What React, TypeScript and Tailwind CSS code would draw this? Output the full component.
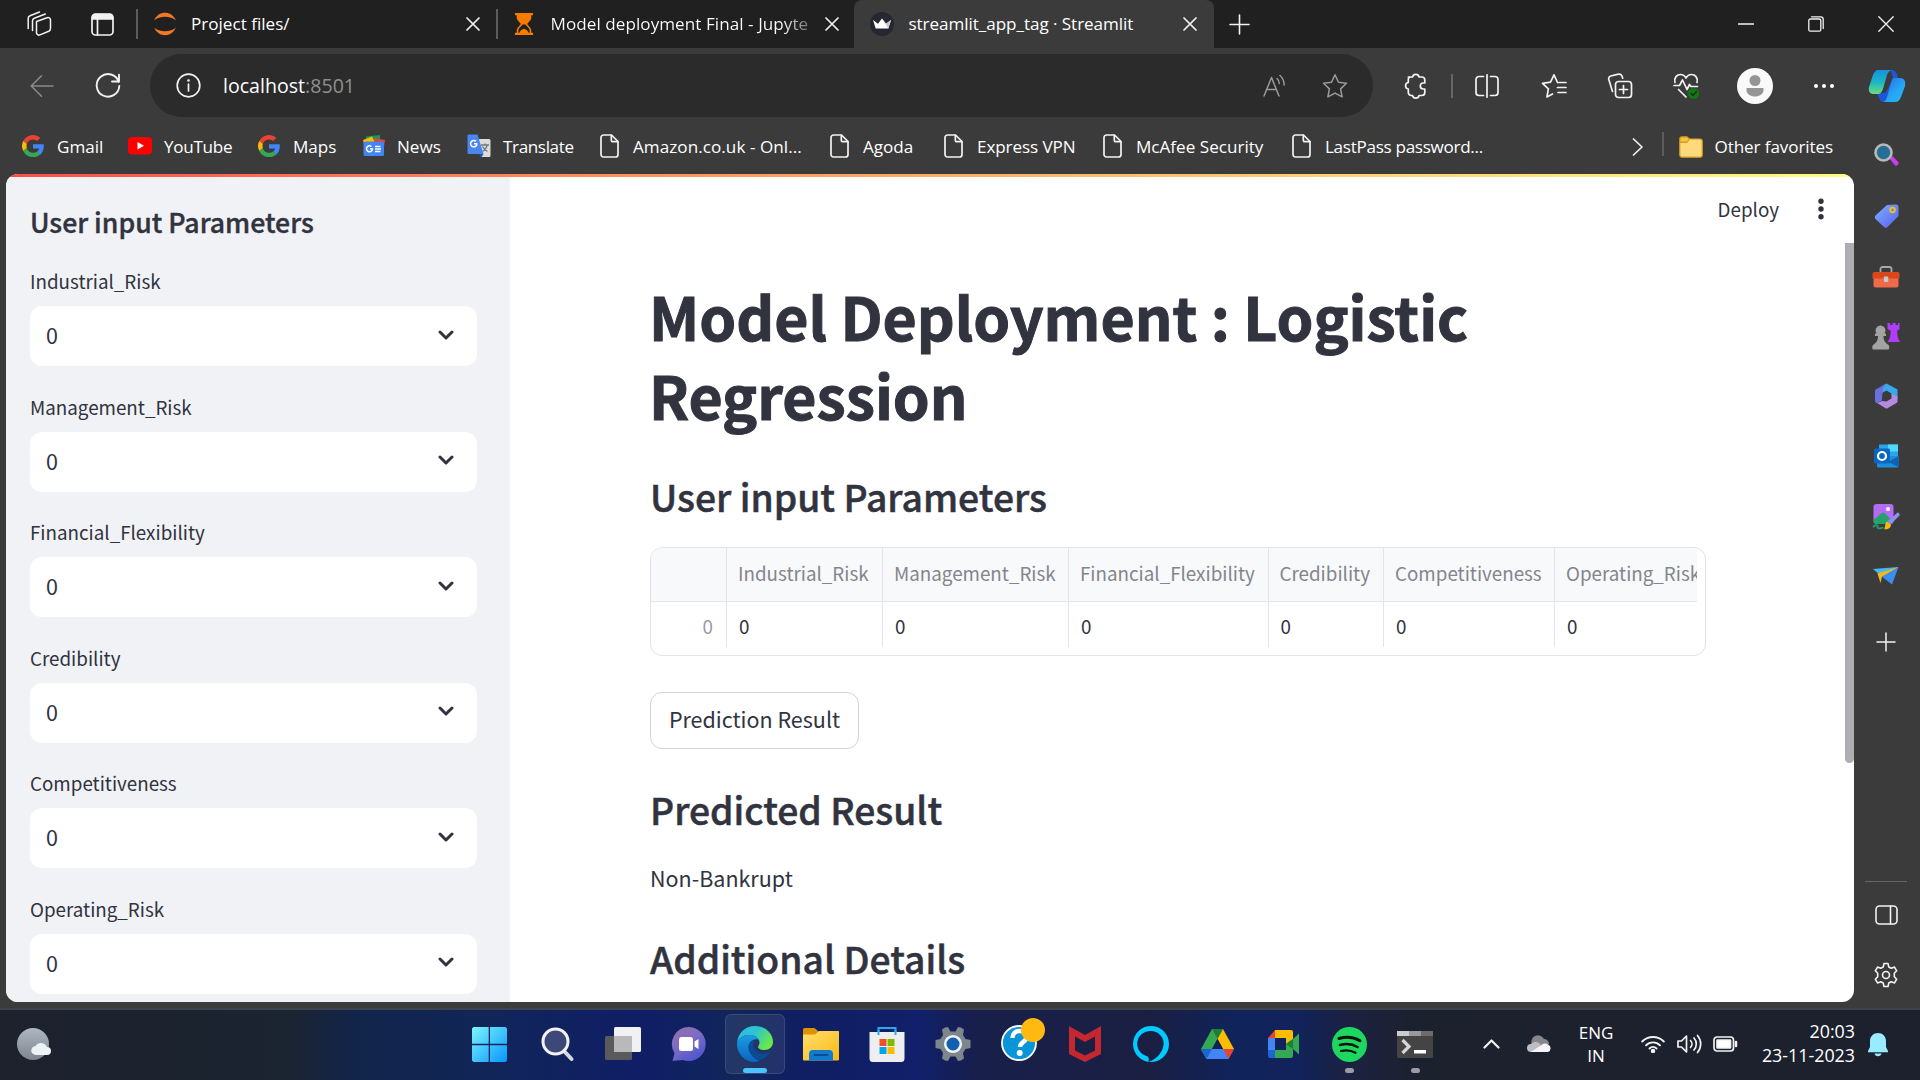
import React from 'react';

type P = { children?: React.ReactNode };

const Stroke = ({ w, h, children, c = '#f2f2f2', sw = 1.6 }: P & { w: number; h: number; c?: string; sw?: number }) => (
  <svg width={w} height={h} viewBox={`0 0 ${w} ${h}`} fill="none" stroke={c} strokeWidth={sw} strokeLinecap="round" strokeLinejoin="round" className="block shrink-0">
    {children}
  </svg>
);
const Art = ({ w, h, children }: P & { w: number; h: number }) => (
  <svg width={w} height={h} viewBox={`0 0 ${w} ${h}`} className="block shrink-0 overflow-visible">{children}</svg>
);

/* Centres an icon in a fixed-width cell of a bar */
const Cell = ({ className, children }: P & { className: string }) => (
  <div className={`flex shrink-0 items-center justify-center ${className}`}>{children}</div>
);

const Close = () => (
  <Stroke w={14} h={14} sw={1.7}><path d="M1 1 13 13M13 1 1 13" /></Stroke>
);

/* ---------- tab strip ---------- */
function TabStrip() {
  return (
    <div className="flex h-12 shrink-0 items-center bg-[#202020] text-[17.1px] text-white">
      <Cell className="w-[78px]">
        <Stroke w={26} h={26} sw={1.5}>
          <path d="M10.5 10.5 21 6.8c1.7-.6 3.5.3 3.500 2.200v8.600c0 1.200-.7 2.200-1.800 2.700l-8.700 3.600c-1.700.7-3.500-.4-3.500-2.200z" />
          <path d="M6.500 19.500V9.800c0-1.200.7-2.200 1.800-2.600l11-4.200" />
          <path d="M2.200 17.500V7.300c0-1.200.7-2.200 1.800-2.600L13.500 1" />
        </Stroke>
      </Cell>
      <Cell className="w-[48px]">
        <Stroke w={23} h={23} sw={1.7}>
          <rect x="1" y="1" width="21" height="21" rx="3.500" />
          <path d="M1.500 6V4.500a3 3 0 0 1 3-3h14a3 3 0 0 1 3 3V6z" fill="#f2f2f2" />
          <path d="M6.500 6v16" />
        </Stroke>
      </Cell>
      <div className="ml-[10px] h-[30px] w-[1.500px] bg-[#5c5c5c]" />
      <Cell className="ml-[15.500px] w-6">
        <Art w={24} h={24}>
          <path d="M1 8.500C3.500 3.200 7.500.8 12 .8s8.500 2.400 11 7.700C20 5.900 16.300 4.700 12 4.700S4 5.900 1 8.500z" fill="#f37726" />
          <path d="M1 15.500c2.500 5.300 6.500 7.700 11 7.700s8.500-2.400 11-7.700c-3 2.600-6.700 3.800-11 3.800S4 18.100 1 15.500z" fill="#f37726" />
        </Art>
      </Cell>
      <span className="ml-[14px] w-[275px] whitespace-nowrap">Project files/</span>
      <Close />
      <div className="ml-[16px] h-[30px] w-[1.500px] bg-[#5c5c5c]" />
      <Cell className="ml-[16px] w-5">
        <Art w={18} h={22}>
          <path d="M0 0h18v2.200H0zM0 19.800h18V22H0z" fill="#f57c00" />
          <path d="M2.600 2v3c0 2.500 4 4.500 4 6s-4 3.500-4 6v3M15.400 2v3c0 2.500-4 4.500-4 6s4 3.500 4 6v3" stroke="#f57c00" strokeWidth="1.700" fill="none" />
          <path d="M2.600 2h12.800v3c0 2.500-4 4.500-4 6.500H6.600c0-2-4-4-4-6.500zM4.500 20c.3-2.200 2-3.600 4.500-4.300 2.500.7 4.200 2.100 4.500 4.300z" fill="#f57c00" />
        </Art>
      </Cell>
      <span className="ml-[17px] w-[263px] whitespace-nowrap bg-linear-to-r from-white from-88% to-[#555] bg-clip-text tracking-[0.05px] text-transparent">
        Model deployment Final - Jupyte
      </span>
      <div className="ml-[11px]"><Close /></div>
      <div className="ml-[15px] flex h-12 w-[360px] shrink-0 items-center rounded-t-lg bg-[#3b3b3b] pl-[16px]">
        <Art w={24} h={24}>
          <circle cx="12" cy="12" r="12" fill="#262730" />
          <path d="M3 8l5 3.800L12 6.500l4 5.300L21 8l-2.700 8.500H5.700z" fill="#fff" />
          <path d="M12 6.500l4 5.300L21 8l-2.700 8.500z" fill="#c9c9cf" />
        </Art>
        <span className="ml-[15px] w-[274px] whitespace-nowrap tracking-[-0.060px]">streamlit_app_tag · Streamlit</span>
        <Close />
      </div>
      <Cell className="ml-[14px] w-6">
        <Stroke w={21} h={21} sw={1.6}><path d="M10.500 1v19M1 10.500h19" /></Stroke>
      </Cell>
      <div className="flex flex-1 justify-end pr-[26px]">
        <Cell className="w-[70px]"><Stroke w={16} h={16} sw={1.3}><path d="M.5 8h15" /></Stroke></Cell>
        <Cell className="w-[70px]">
          <Stroke w={16} h={16} sw={1.300}>
            <rect x=".8" y="3" width="12" height="12.200" rx="1.500" />
            <path d="M3.500 .8h9.300a2.400 2.400 0 0 1 2.400 2.400v9.300" />
          </Stroke>
        </Cell>
        <div className="flex w-[43px] items-center justify-end"><Stroke w={16} h={16} sw={1.300}><path d="M.8.800l14.400 14.400M15.200.800L.8 15.200" /></Stroke></div>
      </div>
    </div>
  );
}

/* ---------- address bar ---------- */
function Toolbar() {
  return (
    <div className="flex h-[75px] shrink-0 items-center bg-[#3b3b3b]">
      <Cell className="ml-[30px] w-6">
        <Stroke w={24} h={24} c="#8a8a8a"><path d="M23 12H1.500M11.500 1.800 1.200 12l10.300 10.200" /></Stroke>
      </Cell>
      <Cell className="ml-[42px] w-6">
        <Stroke w={26} h={26} sw={1.900}><path d="M23.800 9A11.300 11.300 0 1 0 24.300 13M24 1.800V8.500h-7" /></Stroke>
      </Cell>
      <div className="ml-[30px] flex h-[63px] w-[1223px] items-center rounded-full bg-[#2b2b2b] text-[19.600px]">
        <Cell className="ml-[25px] w-[26px]">
          <Stroke w={25} h={25} sw={1.700}>
            <circle cx="12.500" cy="12.500" r="11.300" />
            <path d="M12.500 11v7" />
            <circle cx="12.500" cy="7.500" r=".5" fill="#fff" />
          </Stroke>
        </Cell>
        <span className="ml-[22px] flex-1 text-white">localhost<span className="text-[#8f8f8f]">:8501</span></span>
        <Cell className="w-[50px]">
          <Stroke w={24} h={24} c="#9a9a9a" sw={1.500}>
            <path d="M1 22 8.500 3.500 16 22M3.500 15.500h10" />
            <path d="M14 4.500c1.500 1.200 2.300 3 2.300 5M17 1.500c2.500 2 4 5 4.200 9.500" />
          </Stroke>
        </Cell>
        <Cell className="mr-[3px] w-[70px]">
          <Stroke w={26} h={26} c="#9a9a9a" sw={1.500}><path d="M13 1.800l3.500 7.400 8 1.100-5.900 5.600 1.500 8L13 20.100 5.900 23.900l1.500-8L1.500 10.300l8-1.100z" /></Stroke>
        </Cell>
      </div>
      <Cell className="ml-[24px] w-9">
        <Stroke w={24} h={26} sw={1.700}>
          <path d="M4.500 4.500h4.200a3.400 3.400 0 0 1 6.600 0H18a3 3 0 0 1 3 3v3h-1.500a3 3 0 0 0 0 6H21v3.500a3 3 0 0 1-3 3h-2.700a3.400 3.400 0 0 1-6.600 0H7.500a3 3 0 0 1-3-3v-3.500a3.300 3.300 0 0 1 0-6.500V7a2.500 2.500 0 0 1 2.500-2.500" transform="translate(.8 -.5)" />
        </Stroke>
      </Cell>
      <div className="ml-[18px] h-6 w-[1.500px] bg-[#666]" />
      <Cell className="w-[69px]">
        <Stroke w={24} h={24} sw={1.700}>
          <path d="M12 .8v22.400M8.500 2.500H4a3 3 0 0 0-3 3v13a3 3 0 0 0 3 3h4.500M15.500 2.500H20a3 3 0 0 1 3 3v13a3 3 0 0 1-3 3h-4.500" />
        </Stroke>
      </Cell>
      <Cell className="w-[65px]">
        <Stroke w={26} h={26} sw={1.700}>
          <path d="M16.500 9.500 13 1.800 9.500 9.200l-8 1.100 5.900 5.600-1.500 8L11.500 21M18 9.500h7M16.500 14.500h8.500M17 19.500h8" />
        </Stroke>
      </Cell>
      <Cell className="w-[66px]">
        <Stroke w={26} h={26} sw={1.700}>
          <rect x="8.500" y="8.500" width="16" height="16" rx="3" />
          <path d="M16.500 12.500v8M12.500 16.500h8M5.500 18.500 1.800 6.500A3 3 0 0 1 3.700 3L11.500 1.200a3 3 0 0 1 3.600 2l.6 2" />
        </Stroke>
      </Cell>
      <Cell className="w-[66px]">
        <Stroke w={26} h={26} sw={1.700}>
          <path d="M2 9.500C.8 4.500 4 1.500 7.500 1.500c2.500 0 4.300 1.300 5.500 3.500 1.200-2.200 3-3.500 5.500-3.500C22 1.500 25.200 4.500 24 9.500" />
          <path d="M1 12.500h5.500L9.500 7l4.500 9.500 2.500-5 1.500 2h6.500M5.500 16.500l7.500 7.500" />
          <circle cx="20.500" cy="20.500" r="5.300" fill="#107c10" stroke="#107c10" strokeWidth=".5" />
          <path d="M18 20.500l2 2 3.500-4" stroke="#1d2b1d" strokeWidth="1.300" />
        </Stroke>
      </Cell>
      <Cell className="w-[72px]">
        <Art w={36} h={36}>
          <circle cx="18" cy="18" r="18" fill="#f9f9f9" />
          <circle cx="18" cy="12.500" r="5.500" fill="#959595" />
          <path d="M9.500 20h17v2c0 4-4 6.500-8.500 6.500S9.500 26 9.500 22z" fill="#959595" />
        </Art>
      </Cell>
      <Cell className="w-[66px]">
        <Art w={20} h={4}><circle cx="2" cy="2" r="2" fill="#fff" /><circle cx="10" cy="2" r="2" fill="#fff" /><circle cx="18" cy="2" r="2" fill="#fff" /></Art>
      </Cell>
      <Cell className="w-[60px]">
        <Art w={36} h={32}>
          <defs>
            <linearGradient id="cpA" x1="0" y1="0" x2="0" y2="1"><stop offset="0" stopColor="#1a8fe0" /><stop offset=".5" stopColor="#18b5c8" /><stop offset="1" stopColor="#6fdc7a" /></linearGradient>
            <linearGradient id="cpB" x1="0" y1="0" x2="1" y2="1"><stop offset="0" stopColor="#2a62e8" /><stop offset=".6" stopColor="#27a8f5" /><stop offset="1" stopColor="#22b8f0" /></linearGradient>
          </defs>
          <path d="M8 23h8l2-3 6-12c-1-6-3-8-5-8h4c3 0 5 3 6 8l-9 21c-1 2-2 3-4 3-3 0-5-1-6-4z" fill="#1b57d6" />
          <path d="M9 0h14c-2 0-4 2-5 5l-4 14c-1 3-3 5-5 5H4c-3 0-5-3-4-7L4 5c1-3 3-5 5-5z" fill="url(#cpA)" />
          <path d="M25 8h6c4 0 6 3 5 8l-4 11c-1 3-3 5-6 5H13c3 0 4-2 5-5l4-14c1-3 1-5 3-5z" fill="url(#cpB)" />
        </Art>
      </Cell>
    </div>
  );
}

/* ---------- favorites bar ---------- */
const Google = () => (
  <Art w={22} h={22}>
    <path d="M11 4.400c2 0 3.300.8 4.200 1.600l3.200-3.200A11 11 0 0 0 1.200 6.100l3.600 2.800A6.600 6.600 0 0 1 11 4.400z" fill="#ea4335" />
    <path d="M21.700 9.200H11v4.300h6.100a5.400 5.400 0 0 1-2.300 3.500l3.500 2.700c2.200-2 3.500-5 3.500-8.500 0-.7 0-1.300-.1-2z" fill="#4285f4" />
    <path d="M4.800 13a6.600 6.600 0 0 1 0-4.100L1.200 6.100a11 11 0 0 0 0 9.800z" fill="#fbbc05" />
    <path d="M11 22c3 0 5.500-1 7.300-2.600L14.800 16.800c-1 .7-2.200 1-3.800 1A6.600 6.600 0 0 1 4.800 13l-3.600 2.900A11 11 0 0 0 11 22z" fill="#34a853" />
  </Art>
);
const YouTube = () => (
  <Art w={24} h={18}><rect width="24" height="17.500" rx="4" fill="#f00" /><path d="M9.500 5v7.500l6.500-3.700z" fill="#fff" /></Art>
);
const News = () => (
  <Art w={24} h={22}>
    <path d="M4 1.500 18 0v9H5z" fill="#0f9d58" />
    <path d="M1 5l9-3.500 4 8L3 13z" fill="#fbbc04" />
    <path d="M12 3l11 2-1.500 10H12z" fill="#ea4335" />
    <rect x="1.500" y="6.500" width="20.500" height="14.500" rx="1.500" fill="#4285f4" />
    <path d="M10.500 13.500a3 3 0 1 1-1-2M8 13.800h2.600" stroke="#fff" strokeWidth="1.500" fill="none" />
    <path d="M13 11.500h5.500M13 14h6M13 16.500h5.500" stroke="#fff" strokeWidth="1.500" />
  </Art>
);
const Translate = () => (
  <Art w={24} h={24}>
    <path d="M10 5h12a1.500 1.500 0 0 1 1.500 1.500v15A1.500 1.500 0 0 1 22 23h-8z" fill="#dcdcdc" />
    <path d="M14 11h8M18 9.500V11M20.500 11c-.8 3-3 5-5 6.500M15.500 12.500c1 2 3 4 5 5" stroke="#6f7b80" strokeWidth="1.300" fill="none" />
    <path d="M12 20h4.500L14 24z" fill="#1b54b8" />
    <path d="M1.500.500h9L16.500 20H2A1.500 1.500 0 0 1 .5 18.500v-17z" fill="#4a86ee" />
    <path d="M10 9.500a3.200 3.200 0 1 1-1-2.200M7 9.800h3.200" stroke="#fff" strokeWidth="1.500" fill="none" />
  </Art>
);
const Page = () => (
  <Stroke w={19} h={24} sw={1.700}>
    <path d="M3.500 1h8L18 7.500V20.500a2.500 2.500 0 0 1-2.500 2.500h-12A2.500 2.500 0 0 1 1 20.500v-17A2.500 2.500 0 0 1 3.500 1z" />
    <path d="M11.300 1.300V6A1.700 1.700 0 0 0 13 7.700h4.700" />
  </Stroke>
);

const favorites: [React.ReactNode, string, string, string, string][] = [
  [<Google />, 'Gmail', 'w-[106px]', 'w-[35px]', ''],
  [<YouTube />, 'YouTube', 'w-[130px]', 'w-[36px]', 'tracking-[-0.3px]'],
  [<Google />, 'Maps', 'w-[104px]', 'w-[35px]', ''],
  [<News />, 'News', 'w-[105px]', 'w-[35px]', ''],
  [<Translate />, 'Translate', 'w-[133px]', 'w-[36px]', 'tracking-[-0.38px]'],
  [<Page />, 'Amazon.co.uk - Onl...', 'w-[230px]', 'w-[33px]', 'tracking-[0.05px]'],
  [<Page />, 'Agoda', 'w-[114px]', 'w-[33px]', ''],
  [<Page />, 'Express VPN', 'w-[159px]', 'w-[33px]', 'tracking-[-0.1px]'],
  [<Page />, 'McAfee Security', 'w-[189px]', 'w-[33px]', ''],
  [<Page />, 'LastPass password...', 'w-[340px]', 'w-[33px]', 'tracking-[-0.3px]'],
];

function Favorites() {
  return (
    <div className="flex h-[51px] shrink-0 items-center bg-[#3b3b3b] pb-[4px] pl-[22px] text-[17.100px] text-white">
      {favorites.map(([icon, label, w, iw, tr], i) => (
        <div key={i} className={`flex shrink-0 items-center ${w}`}>
          <div className={`shrink-0 ${iw}`}>{icon}</div>
          <span className={`whitespace-nowrap ${tr}`}>{label}</span>
        </div>
      ))}
      <Stroke w={11} h={18} sw={1.700}><path d="M1.500 1 10 9l-8.500 8" /></Stroke>
      <div className="mb-[6px] ml-[19px] h-6 w-[1.500px] bg-[#5c5c5c]" />
      <div className="ml-[15px] w-9">
        <Art w={24} h={22}>
          <path d="M.8 3A2.200 2.200 0 0 1 3 .8h5L10.500 3v3H.8z" fill="#f5c342" stroke="#c99a16" strokeWidth="1.200" />
          <path d="M.8 6.500h7L10.500 3H21a2.200 2.200 0 0 1 2.200 2.200V19A2.200 2.200 0 0 1 21 21.200H3A2.200 2.200 0 0 1 .8 19z" fill="#ffd97a" stroke="#d5a021" strokeWidth="1.200" />
        </Art>
      </div>
      <span className="whitespace-nowrap tracking-[-0.1px]">Other favorites</span>
    </div>
  );
}

/* ---------- streamlit page ---------- */
const fields = ['Industrial_Risk', 'Management_Risk', 'Financial_Flexibility', 'Credibility', 'Competitiveness', 'Operating_Risk'];

function Sidebar() {
  return (
    <aside className="h-full w-[504px] shrink-0 overflow-hidden bg-[#f0f2f6] pl-6 pr-[33px] pt-[27px]">
      <h2 className="text-[26.650px] leading-9 font-medium [-webkit-text-stroke:0.4px_#31333f]">User input Parameters</h2>
      <div className="pt-[26px]">
        {fields.map((f) => (
          <div key={f} className="h-[125.600px]">
            <div className="h-10 text-[18.800px] leading-[30px]">{f}</div>
            <div className="flex h-[60px] items-center justify-between rounded-xl bg-white pb-[3px] pl-[16px] pr-[23px] text-[21.500px] leading-[57px]">
              <span>0</span>
              <Stroke w={16} h={10} c="#31333f" sw={3}><path d="M2 2l6 6 6-6" /></Stroke>
            </div>
          </div>
        ))}
      </div>
    </aside>
  );
}

const columns: [string, string][] = [
  ['Industrial_Risk', 'w-[156px]'],
  ['Management_Risk', 'w-[186px]'],
  ['Financial_Flexibility', 'w-[199.500px]'],
  ['Credibility', 'w-[115.500px]'],
  ['Competitiveness', 'w-[171px]'],
  ['Operating_Risk', 'w-[142px]'],
];

function DataTable() {
  return (
    <div className="flex h-[109px] w-[1056px] overflow-hidden rounded-xl border border-[#e2e3e7] text-[18.800px]">
      <div className="w-[76px] shrink-0">
        <div className="h-[54px] border-r-[1.500px] border-b-[1.500px] border-[#e3e5e8] bg-[#f8f9fb]" />
        <div className="h-[45px] border-r-[1.500px] border-[#e3e5e8] pr-[13px] text-right leading-[48px] text-[#9a9ba3]">0</div>
      </div>
      {columns.map(([name, w], i) => (
        <div key={name} className={`shrink-0 overflow-hidden ${w}`}>
          <div className={`h-[54px] border-b-[1.500px] border-[#e3e5e8] bg-[#f8f9fb] pl-[11px] leading-[50px] whitespace-nowrap text-[#83858d] ${i < 5 ? 'border-r-[1.500px]' : ''}`}>{name}</div>
          <div className={`h-[45px] border-[#e3e5e8] pl-[12px] leading-[48px] ${i < 5 ? 'border-r-[1.500px]' : ''}`}>0</div>
        </div>
      ))}
    </div>
  );
}

const Heading = ({ children, className }: P & { className: string }) => (
  <h3 className={`h-[50px] text-[37.280px] leading-[50px] font-medium [-webkit-text-stroke:0.5px_#31333f] ${className}`}>{children}</h3>
);

function StreamlitPage() {
  return (
    <div className="flex h-[828px] w-[1848px] flex-col overflow-hidden rounded-xl bg-white font-['Noto_Sans_CJK_SC',sans-serif] text-[#31333f]">
      <div className="h-[3px] shrink-0 bg-linear-to-r from-[#ff4b4b] to-[#fffd80]" />
      <div className="flex min-h-0 flex-1">
        <Sidebar />
        <div className="flex min-w-0 flex-1 flex-col">
          <div className="flex h-[66px] shrink-0 items-center justify-end pr-[30px] pb-[2px]">
            <span className="text-[18.800px] leading-[30px]">Deploy</span>
            <div className="ml-[39px]">
              <Art w={6} h={22}><circle cx="3" cy="3.200" r="2.700" fill="#31333f" /><circle cx="3" cy="11" r="2.700" fill="#31333f" /><circle cx="3" cy="18.800" r="2.700" fill="#31333f" /></Art>
            </div>
          </div>
          <div className="flex min-h-0 flex-1">
            <main className="min-h-0 flex-1 overflow-hidden pl-[140px] pt-[33px]">
              <h1 className="-ml-px w-[1056px] text-[58.980px] leading-[79px] font-bold [-webkit-text-stroke:1px_#31333f]">Model Deployment : Logistic<br />Regression</h1>
              <Heading className="mt-[37px]">User input Parameters</Heading>
              <div className="mt-[26px]"><DataTable /></div>
              <button className="mt-[36px] block h-[57px] w-[209px] rounded-xl border border-[#d3d4d8] pb-[3px] text-[21.500px] leading-[52px]">Prediction Result</button>
              <Heading className="mt-[35px]">Predicted Result</Heading>
              <p className="mt-[25px] text-[21.500px] leading-[38px]">Non-Bankrupt</p>
              <Heading className="mt-[36px]">Additional Details</Heading>
            </main>
            <div className="h-[520px] w-[9px] rounded-b-full bg-[#adadb2]" />
          </div>
        </div>
      </div>
    </div>
  );
}

/* ---------- edge sidebar ---------- */
function EdgeSidebar() {
  return (
    <div className="flex h-full flex-1 flex-col items-center pr-[2px]">
      <Cell className="-mt-[47px] h-[56px]">
        <Art w={25} h={24}>
          <path d="M15.500 15.500l3-2.500 6 6.500c.5 2-2 4-3.500 3z" fill="#c83cf2" />
          <circle cx="9.500" cy="9.500" r="8" fill="#256f96" stroke="#b9b9b9" strokeWidth="2.600" />
        </Art>
      </Cell>
      <Cell className="h-[66px]">
        <Art w={25} h={24}>
          <defs><linearGradient id="tg" x1="0" y1="0" x2="1" y2="1"><stop stopColor="#7fb2ff" /><stop offset="1" stopColor="#5a5cf5" /></linearGradient></defs>
          <path d="M13 1l9-.5a2.500 2.500 0 0 1 2.500 2.500v9L13.500 23a2.500 2.500 0 0 1-3.500 0L1.500 15a2.500 2.500 0 0 1 0-3.500z" fill="url(#tg)" />
          <circle cx="18.500" cy="6" r="2.300" fill="none" stroke="#f5c400" strokeWidth="1.800" />
        </Art>
      </Cell>
      <Cell className="h-[56px]">
        <Art w={28} h={22}>
          <path d="M8.500 7V3a2 2 0 0 1 2-2h7a2 2 0 0 1 2 2v4" fill="none" stroke="#a8a8a8" strokeWidth="1.800" />
          <rect x="1.500" y="9" width="25" height="12.500" rx="2" fill="#ee6a48" />
          <path d="M.5 8a2 2 0 0 1 2-2h23a2 2 0 0 1 2 2v4.500H.5z" fill="#d8481c" />
          <rect x="11.800" y="10.500" width="4.500" height="5.500" rx="1" fill="#c9c9c9" />
        </Art>
      </Cell>
      <Cell className="h-[62px]">
        <Art w={28} h={28}>
          <path d="M15.500 1h2.500v2h2.500V1h3v2H26V1h1.500v6L25 9l.8 6.500 2.200 4.500H15.500l2.500-4.500.8-6.500-3.300-2z" fill="#b03cf5" />
          <path d="M8.500 3.500a5 5 0 0 1 4 8H14v2.500h-2.500c0 4 1 6 5 9 1 1 1 4 0 4.500H1c-1-.5-1-3.500 0-4.500 4-3 5-5 5-9H3V11.500h1.500a5 5 0 0 1 4-8z" fill="#a3a3a3" />
        </Art>
      </Cell>
      <Cell className="h-[58px]">
        <Art w={25} h={26}>
          <path d="M12.500.5 23.500 6.500v9l-6-3.500v-1.500l-5-3-4.500 2.500V3z" fill="#3aa8ee" />
          <path d="M23.500 13.500v5a2 2 0 0 1-1 1.500L13.500 25.200a2 2 0 0 1-2 0L3 20l5-2 4.500.5 5-3V11z" fill="#b38ade" />
          <path d="M1 8a2 2 0 0 1 1-1.800L12.500.5 9 4.500 7.800 17.500 3 20.200A3 3 0 0 1 1 18z" fill="#6a70dc" />
        </Art>
      </Cell>
      <Cell className="h-[62px]">
        <Art w={25} h={24}>
          <rect x="5" y=".5" width="19" height="14" fill="#2aa5ec" /><rect x="14" y=".5" width="10" height="7" fill="#50d9ff" />
          <path d="M3 12h21.500v10a1.500 1.500 0 0 1-1.500 1.500H4.500A1.500 1.500 0 0 1 3 22z" fill="#1a8fe0" />
          <path d="M24.500 12 14 18l10.500 5z" fill="#0f64ad" />
          <rect x="0" y="4.500" width="16" height="15" rx="1.500" fill="#0a66bf" />
          <circle cx="8" cy="12" r="4" fill="none" stroke="#fff" strokeWidth="2.200" />
        </Art>
      </Cell>
      <Cell className="h-[58px]">
        <Art w={28} h={27}>
          <rect x="1.500" y="1" width="20" height="20" rx="3" fill="#b56cf5" />
          <path d="M1.500 17 9 10.500a3 3 0 0 1 4 0l7 7-2 3.500H4a3 3 0 0 1-2.500-3z" fill="#26a36a" />
          <circle cx="16" cy="6" r="2" fill="#fff" />
          <path d="M1 24c3-3 5-2 4.500 0s3 1.500 6 .5" stroke="#22a06b" strokeWidth="1.800" fill="none" />
          <path d="M25.500 9.500a2.300 2.300 0 0 1 2 3L19 21l-3.500-2.500z" fill="#8f8df8" />
          <path d="M15 18.500l4 3c0 4-4 5.500-7 4.500 1.500-1 .5-5.500 3-7.500z" fill="#f5b91a" />
        </Art>
      </Cell>
      <Cell className="h-[62px]">
        <Art w={26} h={20}>
          <path d="M0 3 25.500 1 8 10z" fill="#43b9ee" /><path d="M25.500 1 19 18.500 8 10z" fill="#3b8df2" />
          <path d="M25.500 1 4.500 7.500 7.500 17 9 10.500z" fill="#f7b917" />
        </Art>
      </Cell>
      <Cell className="h-[70px]"><Stroke w={20} h={20} sw={1.500}><path d="M10 1v18M1 10h18" /></Stroke></Cell>
      <div className="mt-auto h-[1.500px] w-[42px] bg-[#666]" />
      <Cell className="h-[66px]">
        <Stroke w={23} h={20} sw={1.600}><rect x="1" y="1" width="21" height="18" rx="3.500" /><path d="M15.500 1v18" /></Stroke>
      </Cell>
      <Cell className="mb-[6px] h-[54px]">
        <Stroke w={26} h={26} sw={1.600}>
          <path d="M11 1.500h4l.8 3.500 2.400 1.300 3.300-1.200 2.200 3.700-2.400 2.500v3.400l2.400 2.500-2.200 3.700-3.300-1.200L15.800 21l-.8 3.500h-4l-.8-3.500-2.400-1.300-3.300 1.200-2.200-3.700 2.400-2.500v-3.400L2.300 8.800l2.200-3.700 3.300 1.200L10.200 5z" />
          <circle cx="13" cy="13" r="3.500" />
        </Stroke>
      </Cell>
    </div>
  );
}

/* ---------- taskbar ---------- */
const Windows = () => (
  <Art w={35} h={35}>
    <defs><linearGradient id="wn" gradientUnits="userSpaceOnUse" x1="0" y1="0" x2="35" y2="35"><stop stopColor="#7df5fb" /><stop offset="1" stopColor="#0796ff" /></linearGradient></defs>
    <path d="M1.500 0H16.700v16.700H0V1.500zM18 0h15.500L35 1.500v15.200H18zM0 18.200h16.700V35H1.500L0 33.500zM18 18.200h17v15.300L33.500 35H18z" fill="url(#wn)" />
  </Art>
);
const Search = () => (
  <Art w={33} h={34}>
    <path d="M23 24l7.500 8" stroke="#d9d9dd" strokeWidth="4" strokeLinecap="round" />
    <circle cx="14.500" cy="14.500" r="12.500" fill="#3d4878" stroke="#f2f2f4" strokeWidth="3" />
  </Art>
);
const TaskView = () => (
  <Art w={36} h={34}>
    <rect x="0" y="9" width="27" height="24" rx="1.500" fill="#5a5a5c" />
    <rect x="9" y="0" width="27" height="25" rx="1.500" fill="#f1f1f3" />
    <path d="M9 9h18v16H10a1 1 0 0 1-1-1z" fill="#b9b9bb" />
  </Art>
);
const Chat = () => (
  <Art w={34} h={34}>
    <defs><linearGradient id="ch" x1="0" y1="0" x2=".6" y2="1"><stop stopColor="#9c6fae" /><stop offset=".5" stopColor="#7b6cc4" /><stop offset="1" stopColor="#5257cf" /></linearGradient></defs>
    <path d="M17 0a17 17 0 1 1-6 33L.5 34 2.500 26A17 17 0 0 1 17 0z" fill="url(#ch)" />
    <rect x="7" y="10" width="14" height="14" rx="2.500" fill="#fff" /><path d="M22.500 14.500l4-2.500v10l-4-2.500z" fill="#fff" />
  </Art>
);
const Edge = () => (
  <Art w={36} h={36}>
    <defs>
      <linearGradient id="e1" x1="0" y1="0" x2="1" y2=".5"><stop stopColor="#32b8f0" /><stop offset=".5" stopColor="#2cc4d0" /><stop offset="1" stopColor="#69e84c" /></linearGradient>
      <linearGradient id="e2" x1="0" y1="0" x2="0" y2="1"><stop stopColor="#1b9de2" /><stop offset="1" stopColor="#0a62c2" /></linearGradient>
    </defs>
    <path d="M0 17C1 7 8 0 18 0c10 0 18 7 18 16 0 5-4 8-8.500 8-4 0-6.500-1.500-6.500-3 0-1 1.500-2 1.500-4.500C22.500 12 18 9 12.500 9 6 9 1.500 12.500 0 17z" fill="url(#e1)" />
    <path d="M0 17C1.500 12.500 6 9 12.500 9c4.500 0 8 2 9.500 5-2-1.500-8-1-9.500 5-1.200 6 2.500 13 9.500 15.500-2 1-3 1.500-5 1.500C8 36 0 28 0 18z" fill="url(#e2)" />
    <path d="M15 14.500c-6 4-5 15 7 20 4-1 8.500-4 10.500-7.500.5-1-.5-1.200-1-.8-3 1.800-9 2-12.500-1.200-3-2.800-4-7-1-9.500z" fill="#0b4b94" />
  </Art>
);
const Explorer = () => (
  <Art w={36} h={33}>
    <defs><linearGradient id="ex" x1="0" y1="0" x2="1" y2="1"><stop stopColor="#ffdf6b" /><stop offset="1" stopColor="#f9b917" /></linearGradient></defs>
    <path d="M0 1.500A1.500 1.500 0 0 1 1.500 0h9c1 0 1.700.3 2.300 1L16 4v6H0z" fill="#dd9200" />
    <path d="M0 6.500h12L16 3h19.500l.5.500V32l-1 .5H1L0 32z" fill="url(#ex)" />
    <path d="M6 32.500V26a4 4 0 0 1 4-4h16a4 4 0 0 1 4 4v6.500z" fill="#117bd0" />
    <path d="M11.500 27h13" stroke="#0a4c8c" strokeWidth="1.800" strokeLinecap="round" />
  </Art>
);
const Store = () => (
  <Art w={36} h={36}>
    <path d="M9.500 8V2h17v6" fill="none" stroke="#28abea" strokeWidth="2" />
    <path d="M.5 6h35v26.500A3.500 3.500 0 0 1 32 36H4a3.500 3.500 0 0 1-3.500-3.500z" fill="#eeeef0" /><path d="M9.500 4v5M26.500 4v5" stroke="#28abea" strokeWidth="2" />
    <path d="M10.500 13h7v7h-7z" fill="#f25022" /><path d="M18.500 13h7v7h-7z" fill="#7fba00" /><path d="M10.500 21h7v7h-7z" fill="#00a4ef" /><path d="M18.500 21h7v7h-7z" fill="#ffb900" />
  </Art>
);
const Settings = () => (
  <Art w={36} h={36}>
    <path d="M10 1.500l3-.5 2.500 4.500h5L23 1l3 .5 3 2-1 5.500 2.500 4 5 1v8l-5 1-2.500 4 1 5.500-3 2-3 .5-2.500-4.500h-5L13 35l-3-.5-3-2 1-5.500-2.500-4-5-1v-8l5-1L8 9 7 3.500z" fill="#7d858d" />
    <circle cx="18" cy="18" r="7.800" fill="#1160b0" stroke="#eff0f2" strokeWidth="2.600" />
  </Art>
);
const Help = () => (
  <Art w={44} h={44}>
    <circle cx="18" cy="25" r="17" fill="#0a95d8" stroke="#fff" strokeWidth="1.800" />
    <path d="M11.500 20c0-4.500 3-7 7-7s7 2.500 7 6c0 5-6.500 5-6.500 10" fill="none" stroke="#fff" strokeWidth="4.500" />
    <circle cx="18.700" cy="35" r="3" fill="#fff" /><circle cx="32" cy="12" r="12" fill="#ffb90f" />
  </Art>
);
const McAfee = () => (
  <Art w={32} h={36}>
    <path d="M0 0l16 9L32 0v28l-16 8L0 28zM6 10.500v14l10 5 10-5v-14L16 16z" fill="#c2282d" fillRule="evenodd" />
  </Art>
);
const Alexa = () => (
  <Art w={36} h={36}>
    <path d="M18 0a18 18 0 1 1 0 36 18 18 0 0 1 0-36zM18 5A12.800 12.800 0 0 0 14 30.200c1.200.4 1.700 1.200 1.700 2.300v3h.8C24 33 30.500 25 30.700 17.500A12.700 12.700 0 0 0 18 5z" fill="#00caff" fillRule="evenodd" />
  </Art>
);
const Drive = () => (
  <Art w={33} h={30}>
    <path d="M11 0l5.500 10L11 20 5.500 30 0 20z" fill="#34a853" /><path d="M22 0 33 20H22L11 0z" fill="#fbbc04" />
    <path d="M11 0h11l-5.500 10z" fill="#188038" /><path d="M0 20h33l-5.500 10h-22z" fill="#4285f4" /><path d="M0 20h11L5.500 30z" fill="#1967d2" /><path d="M22 20h11l-5.500 10z" fill="#ea4335" />
    <path d="M16.500 10 22 20H11z" fill="#141f52" />
  </Art>
);
const Meet = () => (
  <Art w={31} h={28}>
    <path d="M7 0h16a2 2 0 0 1 2 2v7.500L18 14V8H7z" fill="#fbbc04" /><path d="M7 0v8H0z" fill="#ea4335" /><path d="M0 8h7v12H0z" fill="#4285f4" /><path d="M0 20h7v8H2a2 2 0 0 1-2-2z" fill="#1967d2" />
    <path d="M7 20h11v-6l7-5 6-5.500v21L25 19v7a2 2 0 0 1-2 2H7z" fill="#34a853" /><path d="M18 14l7-5v10z" fill="#188038" />
  </Art>
);
const Spotify = () => (
  <Art w={35} h={35}>
    <circle cx="17.500" cy="17.500" r="17.500" fill="#1ed760" />
    <g fill="none" stroke="#06130a" strokeLinecap="round"><path d="M7 11.500c7-2 15-1.200 21 2.200" strokeWidth="3" /><path d="M8 18c6-1.600 12.500-1 17.500 2" strokeWidth="2.600" /><path d="M9 24c5-1.200 10-.8 14.500 1.800" strokeWidth="2.200" /></g>
  </Art>
);
const Terminal = () => (
  <Art w={36} h={27}>
    <rect width="36" height="27" rx="1.500" fill="#444" /><path d="M0 0h12v5H0z" fill="#ccc" /><path d="M12 0h12v5H12z" fill="#999" /><path d="M24 0h12v5H24z" fill="#6c6c6c" />
    <path d="M5.500 9l6.500 6.500L5.500 22" stroke="#d6d6d6" strokeWidth="3.200" fill="none" /><path d="M17 19h12v3.500H17z" fill="#fff" />
  </Art>
);

function Taskbar() {
  const icons = [<Search />, <TaskView />, <Chat />, <Edge />, <Explorer />, <Store />, <Settings />, <Help />, <McAfee />, <Alexa />, <Drive />, <Meet />, <Spotify />, <Terminal />];
  return (
    <div className="flex h-[72px] shrink-0 border-t-2 border-[#3d4450] bg-[linear-gradient(90deg,#1d222d_0,#1b2431_290px,#122549_350px,#11255a_500px,#101e66_640px,#11265a_740px,#101e62_800px,#11206a_920px,#181f4a_980px,#1a1f42_1150px,#10235a_1230px,#11235a_1300px,#1c2140_1350px,#1c212e_1420px,#1c212d_100%)] text-[17px] text-white">
      <div className="flex h-[68px] w-[456px] items-center pl-[17px]">
        <Art w={34} h={33}>
          <defs><linearGradient id="mo" x1="0" y1="0" x2="0" y2="1"><stop stopColor="#aeb8c2" /><stop offset="1" stopColor="#7d858e" /></linearGradient></defs>
          <circle cx="16" cy="16" r="16" fill="url(#mo)" />
          <path d="M19 27a4.500 4.500 0 0 1-.5-9 6.500 6.500 0 0 1 11.500 1 4 4 0 0 1 0 8z" fill="#eff2f4" />
        </Art>
      </div>
      <Cell className="mr-[2px] h-[68px] w-[66px]"><Windows /></Cell>
      {icons.map((icon, i) => (
        <div key={i} className="relative flex h-[68px] w-[66px] shrink-0 items-center justify-center">
          {i === 3 && <div className="absolute inset-x-[3px] top-[4px] h-[60px] rounded-md border border-white/10 bg-white/8" />}
          <div className={`relative ${i === 7 ? 'mb-[8px] ml-[8px]' : ''}`}>{icon}</div>
          {i === 3 && <div className="absolute bottom-[5px] h-[5px] w-6 rounded-full bg-[#4cc2ff]" />}
          {i > 11 && <div className="absolute bottom-[5px] h-[5px] w-[9px] rounded-full bg-[#9a9ba5]" />}
        </div>
      ))}
      <div className="flex h-[68px] flex-1 items-center">
        <Cell className="ml-[43px] w-0"><Stroke w={17} h={10} sw={2.200}><path d="M1.500 8.500 8.500 1.500l7 7" /></Stroke></Cell>
        <Cell className="ml-[48px] w-0">
          <Art w={25} h={16}><path d="M5 9a6.500 6.500 0 0 1 12-6 5 5 0 0 1 5 5l-9 4z" fill="#86868c" /><path d="M4 16a4 4 0 0 1 0-8 6 6 0 0 1 8-1l8 9z" fill="#bcbcc2" /><path d="M3.500 16 14 9.500a5 5 0 0 1 7-1A4 4 0 0 1 21 16z" fill="#f5f5f7" /></Art>
        </Cell>
        <div className="ml-[35px] w-[44px] text-center text-[17px] leading-[23px]">ENG<br />IN</div>
        <Cell className="ml-[22px] w-[26px]">
          <Stroke w={24} h={18} sw={1.900}><path d="M1.200 6.500a15.300 15.300 0 0 1 21.600 0M5 10.300a9.900 9.900 0 0 1 14 0M8.500 13.500a5 5 0 0 1 7 0" /><circle cx="12" cy="16" r="1.300" fill="#fff" /></Stroke>
        </Cell>
        <Cell className="ml-[11px] w-[25px]">
          <Stroke w={25} h={20} sw={1.700}><path d="M1 7v6h3.500l5 5V2l-5 5zM13.500 6.500a5 5 0 0 1 0 7M17 4a9 9 0 0 1 0 12M20.500 1.500a13 13 0 0 1 0 17" /></Stroke>
        </Cell>
        <Cell className="ml-[11px] w-[25px]">
          <Stroke w={25} h={16} sw={1.700}><rect x="1" y="1" width="19.500" height="14" rx="3" /><rect x="4" y="4" width="13.500" height="8" rx=".5" fill="#fff" /><path d="M23 6v4" strokeWidth="2.500" /></Stroke>
        </Cell>
        <div className="-mt-[2px] ml-auto text-right text-[17.850px] leading-6">20:03<br />23-11-2023</div>
        <div className="mt-[2px] mr-[32px] ml-[13px]">
          <Art w={20} h={24}><path d="M10 0c4.500 0 8 3.500 8 8v6l2 4v1.200H0V18l2-4V8c0-4.500 3.500-8 8-8zM6.500 20.500h7a3.600 3.600 0 0 1-7 0z" fill="#99ebff" /></Art>
        </div>
      </div>
    </div>
  );
}

export default function App() {
  return (
    <div className="flex h-[1080px] w-[1920px] flex-col overflow-hidden bg-[#3b3b3b] font-['Open_Sans',sans-serif]">
      <TabStrip />
      <Toolbar />
      <Favorites />
      <div className="flex h-[834px] shrink-0 pl-[6px]">
        <StreamlitPage />
        <EdgeSidebar />
      </div>
      <Taskbar />
    </div>
  );
}
